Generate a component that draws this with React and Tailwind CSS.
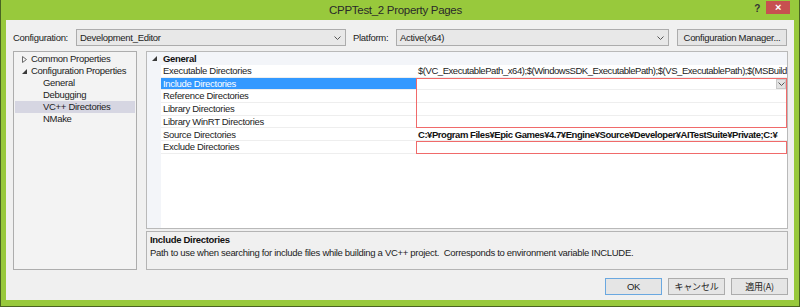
const ui = "font-['Liberation_Sans',Arial,sans-serif] text-[9.5px] tracking-[-0.3px]"
const jp = "font-['Noto_Sans_CJK_JP',sans-serif] text-[9px] tracking-[-0.2px]"

const TREE = [
  { label: 'Common Properties', level: 0, icon: 'closed' },
  { label: 'Configuration Properties', level: 0, icon: 'open' },
  { label: 'General', level: 1 },
  { label: 'Debugging', level: 1 },
  { label: 'VC++ Directories', level: 1, selected: true },
  { label: 'NMake', level: 1 },
]

const ROWS = [
  'Executable Directories',
  'Include Directories',
  'Reference Directories',
  'Library Directories',
  'Library WinRT Directories',
  'Source Directories',
  'Exclude Directories',
]

function Chevron() {
  return (
    <svg width="7" height="4" viewBox="0 0 7 4">
      <path d="M0.5 0.5 L3.5 3.5 L6.5 0.5" fill="none" stroke="#555" strokeWidth="1" />
    </svg>
  )
}

function Expander({ open }) {
  if (open) {
    return (
      <svg width="5" height="5" viewBox="0 0 5 5">
        <path d="M5 0 L5 5 L0 5 Z" fill="#3a3a3a" />
      </svg>
    )
  }
  return (
    <svg width="5" height="7" viewBox="0 0 5 7">
      <path d="M0.5 0.5 L4.5 3.5 L0.5 6.5 Z" fill="none" stroke="#6a6a6a" strokeWidth="1" />
    </svg>
  )
}

function Dropdown({ value, width }) {
  return (
    <div className={`${width} shrink-0 h-[17px] flex items-center justify-between bg-[#e8e8e8] border border-[#acacac] pl-[3px] pr-[4px] text-[#222]`}>
      <span className="whitespace-nowrap">{value}</span>
      <Chevron />
    </div>
  )
}

function Button({ children, primary, className = '' }) {
  return (
    <div className={`w-[57px] shrink-0 h-[17px] flex items-center justify-center bg-[#e5e5e5] border ${primary ? 'border-[#6aa8e0]' : 'border-[#acacac]'} text-[#222] whitespace-nowrap ${className}`}>
      {children}
    </div>
  )
}

export default function App() {
  return (
    <div className={`${ui} w-[800px] h-[307px] flex flex-col bg-[#98c93c] border-x border-b border-[#4a6422] leading-none overflow-hidden`}>
      {/* title bar */}
      <div className="h-[20px] shrink-0 flex items-start">
        <div className="flex-1" />
        <div className="pt-[5px] text-[11.5px] tracking-[-0.3px] text-[#2a2a2a] whitespace-nowrap">CPPTest_2 Property Pages</div>
        <div className="flex-1 flex justify-end items-start pr-[9px] pt-[1px]">
          <span className="mt-[3px] mr-[6px] text-[10px] font-bold text-[#333]">?</span>
          <div className="w-[24px] h-[13px] bg-[#c75050] flex items-center justify-center text-white text-[11px] font-bold">×</div>
        </div>
      </div>

      {/* client area */}
      <div className="flex-1 mx-[5px] mb-[6px] bg-[#f0f0f0] flex flex-col pl-[7px] pr-[6px]">
        <div className="flex items-center pt-[9px]">
          <span className="w-[63px] shrink-0 text-[#222] whitespace-nowrap">Configuration:</span>
          <Dropdown value="Development_Editor" width="w-[270px]" />
          <span className="ml-[7px] w-[43px] shrink-0 text-[#222] whitespace-nowrap">Platform:</span>
          <Dropdown value="Active(x64)" width="w-[273px]" />
          <div className="ml-[8px] w-[110px] shrink-0 h-[17px] flex items-center justify-center bg-[#e5e5e5] border border-[#acacac] text-[#222] whitespace-nowrap">
            Configuration Manager...
          </div>
        </div>

        <div className="flex mt-[5px]">
          {/* tree */}
          <div className="w-[124px] shrink-0 h-[219px] bg-[#f3f3f3] border border-[#adadad] pt-[1px] px-[1px]">
            {TREE.map((t) => (
              <div
                key={t.label}
                className={`h-[12px] flex items-center whitespace-nowrap ${t.selected ? 'bg-[#d6d6e2]' : ''} ${t.level === 1 ? 'pl-[28px]' : 'pl-[7px]'} text-[#222]`}
              >
                {t.icon && (
                  <span className="w-[9px] flex items-center">
                    <Expander open={t.icon === 'open'} />
                  </span>
                )}
                <span>{t.label}</span>
              </div>
            ))}
          </div>

          <div className="ml-[9px] w-[642px] shrink-0 flex flex-col">
            {/* property grid */}
            <div className="h-[178px] bg-white border border-[#b9b9b9] flex flex-col overflow-hidden">
              <div className="h-[13px] shrink-0 flex items-center bg-[#f3f5f9]">
                <span className="w-[14px] flex justify-center pl-[1px]">
                  <Expander open />
                </span>
                <span className="font-bold text-[#111] pl-[2px]">General</span>
              </div>
              <div className="flex flex-1 min-h-0">
                <div className="w-[14px] shrink-0 bg-[#f3f5f9]" />
                <div className="w-[255px] shrink-0 flex flex-col">
                  {ROWS.map((r) => (
                    <div
                      key={r}
                      className={`h-[12.7px] flex items-center pl-[2px] whitespace-nowrap border-b border-[#eeeeee] ${r === 'Include Directories' ? 'bg-[#3399ff] text-white' : 'text-[#222]'}`}
                    >
                      {r}
                    </div>
                  ))}
                </div>
                <div className="flex-1 min-w-0 flex flex-col text-[#222] tracking-[-0.45px]">
                  <div className="h-[12.7px] flex items-center pl-[2px] border-b border-[#eeeeee] whitespace-nowrap overflow-hidden">
                    $(VC_ExecutablePath_x64);$(WindowsSDK_ExecutablePath);$(VS_ExecutablePath);$(MSBuild
                  </div>
                  <div className="flex flex-col outline-1 outline-[#f06a6a] -outline-offset-1">
                    <div className="h-[12.7px] flex items-center justify-end pr-[1px] border-b border-[#eeeeee]">
                      <div className="w-[10px] h-[10px] bg-[#e2e2e2] border border-[#c8c8c8] flex items-center justify-center">
                        <Chevron />
                      </div>
                    </div>
                    <div className="h-[12.7px] border-b border-[#eeeeee]" />
                    <div className="h-[12.7px] border-b border-[#eeeeee]" />
                    <div className="h-[12.7px] border-b border-[#eeeeee]" />
                  </div>
                  <div className="h-[12.7px] flex items-center pl-[2px] border-b border-[#eeeeee] whitespace-nowrap overflow-hidden font-bold text-[#111]">
                    C:¥Program Files¥Epic Games¥4.7¥Engine¥Source¥Developer¥AITestSuite¥Private;C:¥
                  </div>
                  <div className="h-[12.7px] border-b border-[#eeeeee] outline-1 outline-[#f06a6a] -outline-offset-1" />
                </div>
              </div>
            </div>

            {/* description */}
            <div className="mt-[2px] h-[39px] bg-[#f0f0f0] border border-[#b4b4b4] pl-[3px] pt-[2px] flex flex-col gap-[2px] text-[#222]">
              <div className="h-[11px] flex items-center font-bold text-[#111] whitespace-nowrap">Include Directories</div>
              <div className="h-[11px] flex items-center whitespace-pre">
                {'Path to use when searching for include files while building a VC++ project.  Corresponds to environment variable INCLUDE.'}
              </div>
            </div>
          </div>
        </div>

        <div className="mt-[8px] flex justify-end gap-[6px]">
          <Button primary>OK</Button>
          <Button className={jp}>キャンセル</Button>
          <Button className={jp}>適用(A)</Button>
        </div>
      </div>
    </div>
  )
}
